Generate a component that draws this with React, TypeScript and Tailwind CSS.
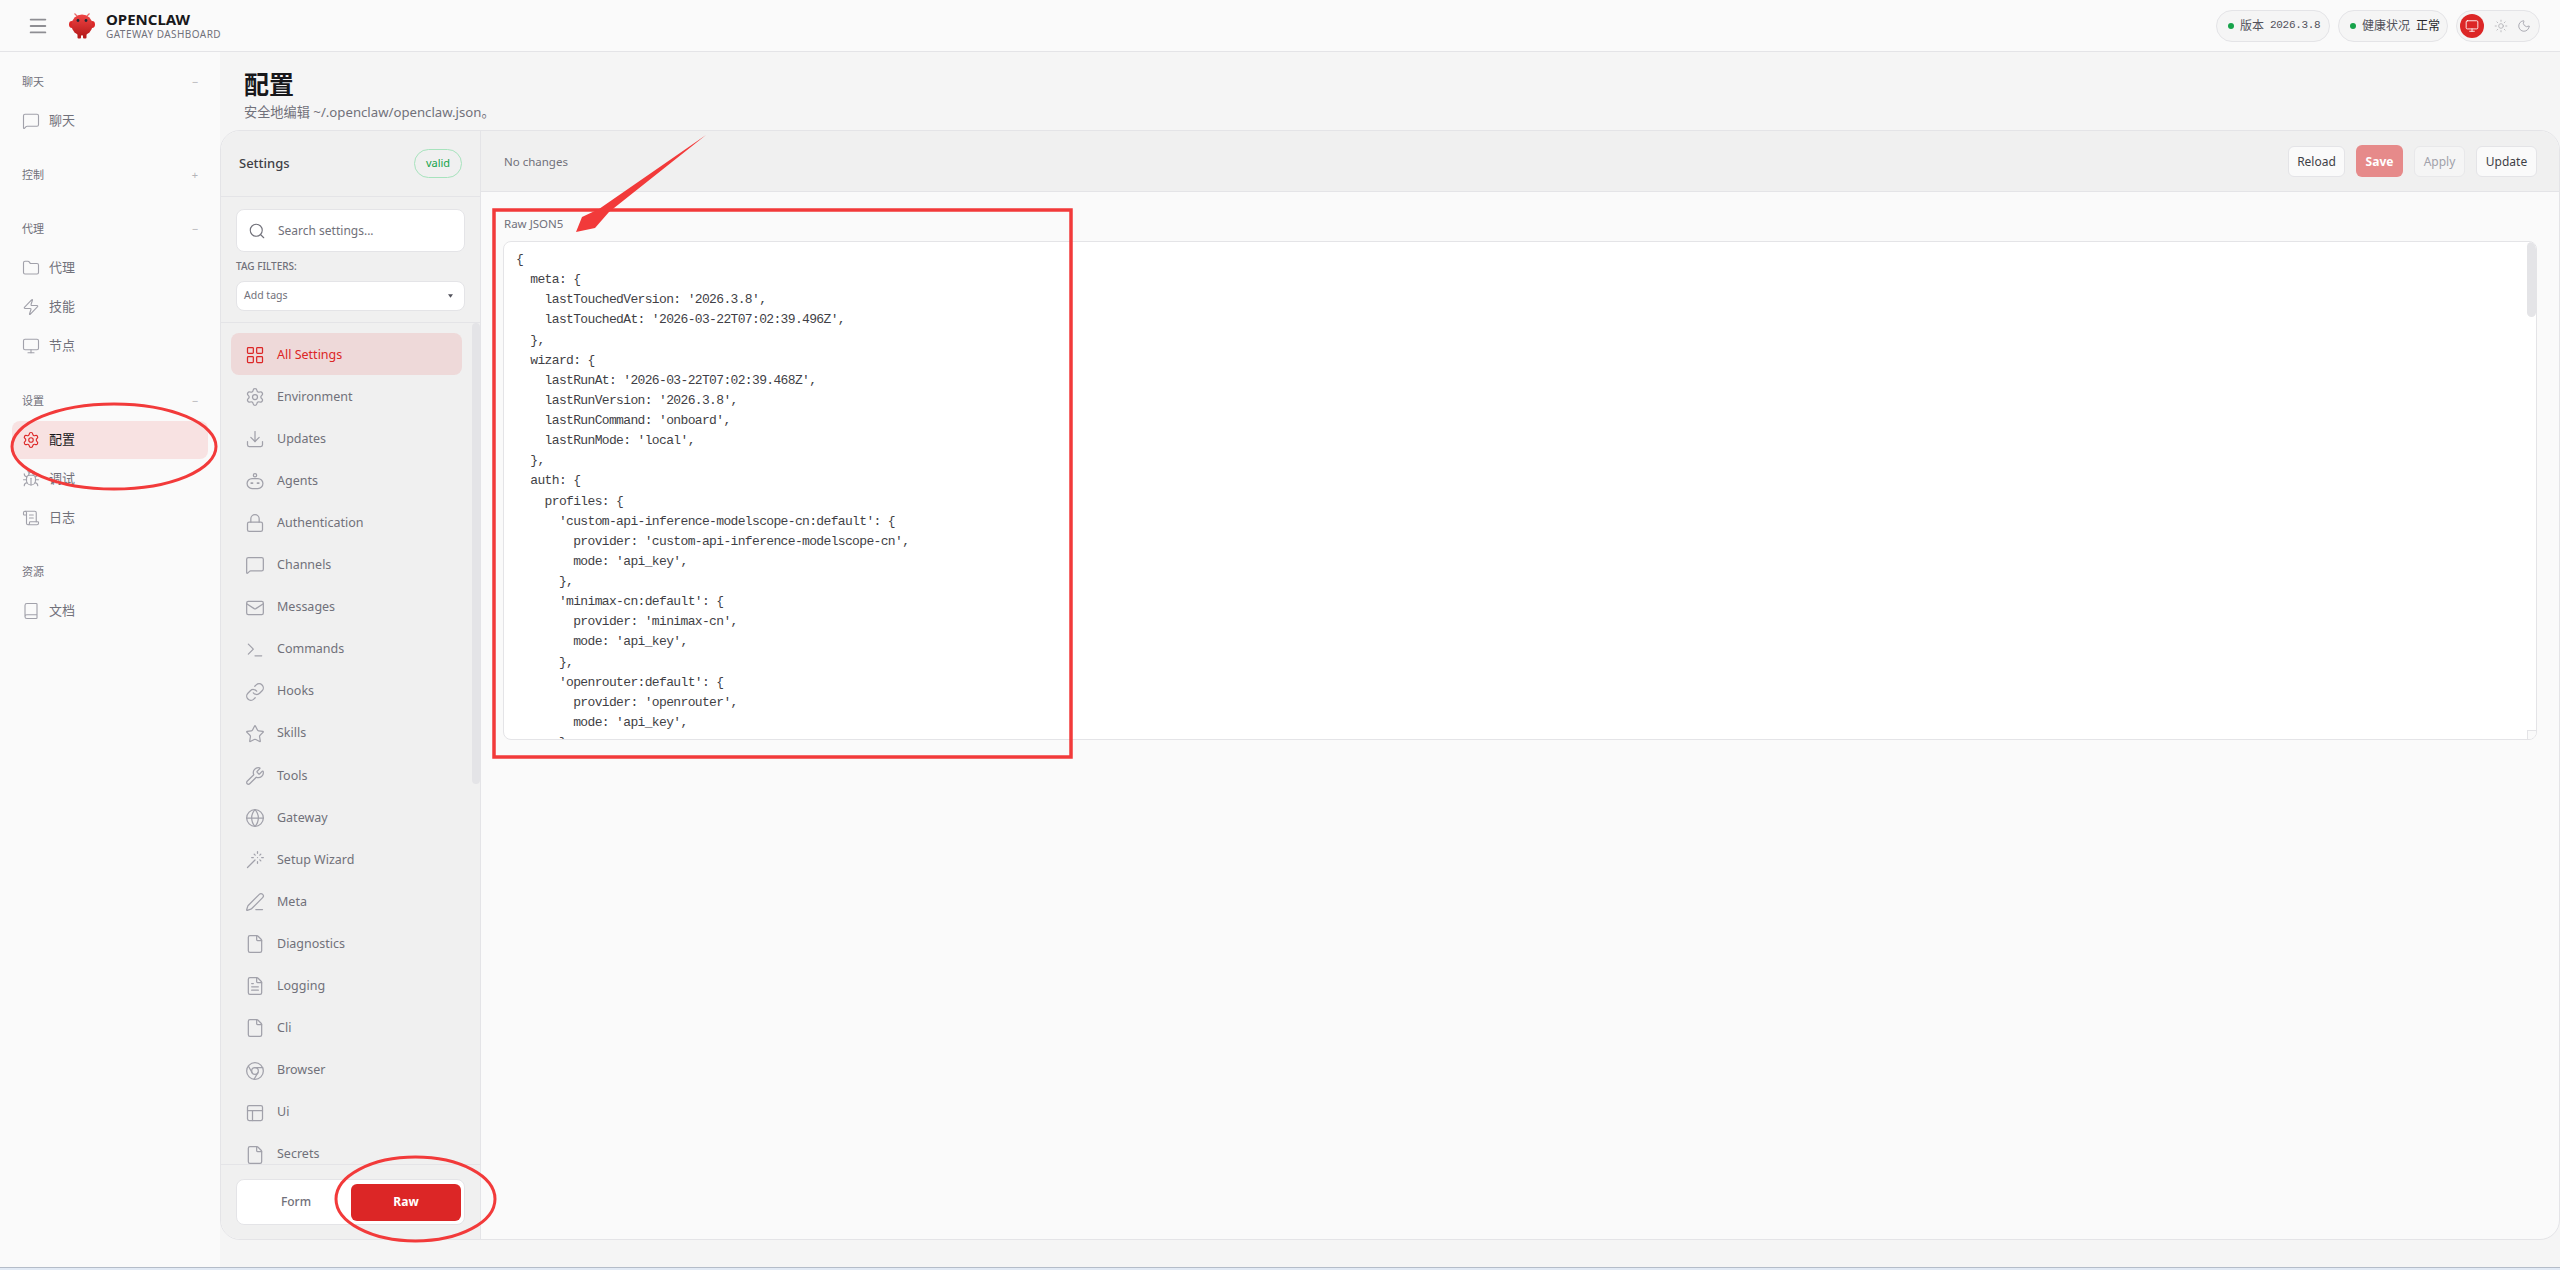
import {
  Book,
  Bug,
  Chrome,
  Download,
  File,
  FileText,
  Folder,
  Globe,
  LayoutGrid,
  Link,
  Lock,
  Mail,
  Menu,
  MessageSquare,
  Monitor,
  Moon,
  PanelsTopLeft,
  PenLine,
  ScrollText,
  Search,
  Settings,
  Star,
  Sun,
  Terminal,
  Wand,
  Wrench,
  Zap,
} from "lucide-react";

const BotIcon = ({ className }: { className?: string }) => (
  <svg viewBox="0 0 24 24" fill="none" stroke="currentColor" strokeWidth="1.5" className={className}>
    <circle cx="12" cy="5" r="2" />
    <rect x="2.5" y="9" width="19" height="12" rx="6" />
    <path d="M7.5 14.5h1.5M15 14.5h1.5" strokeWidth="2.2" strokeLinecap="round" />
  </svg>
);

const settingsNav = [
  { label: "Environment", icon: Settings },
  { label: "Updates", icon: Download },
  { label: "Agents", icon: BotIcon },
  { label: "Authentication", icon: Lock },
  { label: "Channels", icon: MessageSquare },
  { label: "Messages", icon: Mail },
  { label: "Commands", icon: Terminal },
  { label: "Hooks", icon: Link },
  { label: "Skills", icon: Star },
  { label: "Tools", icon: Wrench },
  { label: "Gateway", icon: Globe },
  { label: "Setup Wizard", icon: Wand },
  { label: "Meta", icon: PenLine },
  { label: "Diagnostics", icon: File },
  { label: "Logging", icon: FileText },
  { label: "Cli", icon: File },
  { label: "Browser", icon: Chrome },
  { label: "Ui", icon: PanelsTopLeft },
  { label: "Secrets", icon: File },
];

const rawConfig = `{
  meta: {
    lastTouchedVersion: '2026.3.8',
    lastTouchedAt: '2026-03-22T07:02:39.496Z',
  },
  wizard: {
    lastRunAt: '2026-03-22T07:02:39.468Z',
    lastRunVersion: '2026.3.8',
    lastRunCommand: 'onboard',
    lastRunMode: 'local',
  },
  auth: {
    profiles: {
      'custom-api-inference-modelscope-cn:default': {
        provider: 'custom-api-inference-modelscope-cn',
        mode: 'api_key',
      },
      'minimax-cn:default': {
        provider: 'minimax-cn',
        mode: 'api_key',
      },
      'openrouter:default': {
        provider: 'openrouter',
        mode: 'api_key',
      },`;

function NavGroup({ title, sign, className, children }: { title: string; sign: string; className?: string; children?: React.ReactNode }) {
  return (
    <div className={className}>
      <div className="h-[22px] pl-[22px] pr-[22px] flex items-center justify-between text-[11px] text-[#71717a]">
        <span>{title}</span>
        <span className="text-[#b4b4b8] text-[11px]">{sign}</span>
      </div>
      {children && <div className="mt-[9px] flex flex-col gap-[1px]">{children}</div>}
    </div>
  );
}

function NavItem({ label, icon: Icon, active }: { label: string; icon: React.ComponentType<{ className?: string; strokeWidth?: number }>; active?: boolean }) {
  return (
    <div className={`mx-3 h-[38px] pl-[10px] rounded-[8px] flex items-center gap-[9px] text-[13px] ${active ? "bg-[#f8e2e2] text-[#18181b]" : "text-[#71717a]"}`}>
      <Icon strokeWidth={1.5} className={`w-[18px] h-[18px] ${active ? "text-[#dc2626]" : "text-[#a1a1aa]"}`} />
      <span>{label}</span>
    </div>
  );
}

export default function App() {
  return (
    <div className="relative w-full h-[1270px] overflow-hidden bg-[#f5f5f5] font-['Noto_Sans','Noto_Sans_CJK_SC',sans-serif] flex flex-col">
      {/* Top bar */}
      <header className="h-[52px] shrink-0 bg-[#fafafa] border-b border-[#e4e4e7] flex items-center pl-[27px] pr-[20px]">
        <Menu strokeWidth={2} className="w-[22px] h-[22px] text-[#8e8e93]" />
        <svg viewBox="0 0 26 26" className="ml-[20px] w-[26px] h-[26px]">
          <defs>
            <linearGradient id="claw" x1="0" y1="0" x2="0" y2="1">
              <stop offset="0" stopColor="#ef4444" />
              <stop offset="1" stopColor="#b91c1c" />
            </linearGradient>
          </defs>
          <path d="M8 3 5.5 0.5M18 3l2.5-2.5" stroke="#e86a6a" strokeWidth="1.2" />
          <rect x="8.5" y="20" width="3.5" height="5.5" rx="1" fill="#b91c1c" />
          <rect x="14" y="20" width="3.5" height="5.5" rx="1" fill="#b91c1c" />
          <ellipse cx="3" cy="11.5" rx="3" ry="3.4" fill="#dc2626" />
          <ellipse cx="23" cy="11.5" rx="3" ry="3.4" fill="#dc2626" />
          <circle cx="13" cy="12" r="10.5" fill="url(#claw)" />
          <circle cx="9" cy="7.5" r="1.4" fill="#1f2937" />
          <circle cx="17" cy="7.5" r="1.4" fill="#1f2937" />
        </svg>
        <div className="ml-[11px] flex flex-col">
          <span className="text-[15px] leading-[17px] font-bold text-[#18181b]">OPENCLAW</span>
          <span className="text-[10px] leading-[12px] tracking-[0.45px] text-[#71717a]">GATEWAY DASHBOARD</span>
        </div>
        <div className="ml-auto flex items-center gap-2">
          <div className="h-8 w-[114px] pl-[11px] rounded-full bg-[#f5f5f5] border border-[#e4e4e7] flex items-center gap-[6px] text-[12px] text-[#52525b]">
            <span className="w-[6px] h-[6px] rounded-full bg-[#16a34a]" />
            <span>版本</span>
            <span className="font-['Liberation_Mono',monospace] text-[11px] tracking-[-0.3px]">2026.3.8</span>
          </div>
          <div className="h-8 w-[110px] pl-[11px] rounded-full bg-[#f5f5f5] border border-[#e4e4e7] flex items-center gap-[6px] text-[12px] text-[#52525b]">
            <span className="w-[6px] h-[6px] rounded-full bg-[#16a34a]" />
            <span>健康状况</span>
            <span className="text-[#27272a]">正常</span>
          </div>
          <div className="h-8 w-[84px] pl-[3px] pr-[8px] rounded-full bg-[#f5f5f5] border border-[#e4e4e7] flex items-center justify-between">
            <span className="w-6 h-6 rounded-full bg-[#dc2626] flex items-center justify-center text-white">
              <Monitor strokeWidth={1.5} className="w-[14px] h-[14px]" />
            </span>
            <Sun strokeWidth={1.5} className="w-[14px] h-[14px] text-[#b4b4b8]" />
            <Moon strokeWidth={1.5} className="w-[14px] h-[14px] text-[#a1a1aa]" />
          </div>
        </div>
      </header>

      <div className="flex-1 min-h-0 flex">
        {/* Left navigation */}
        <aside className="w-[220px] shrink-0 bg-[#fafafa] pt-[19px]">
          <NavGroup title="聊天" sign="−">
            <NavItem label="聊天" icon={MessageSquare} />
          </NavGroup>
          <NavGroup title="控制" sign="+" className="mt-[24px]" />
          <NavGroup title="代理" sign="−" className="mt-[32px]">
            <NavItem label="代理" icon={Folder} />
            <NavItem label="技能" icon={Zap} />
            <NavItem label="节点" icon={Monitor} />
          </NavGroup>
          <NavGroup title="设置" sign="−" className="mt-[25px]">
            <NavItem label="配置" icon={Settings} active />
            <NavItem label="调试" icon={Bug} />
            <NavItem label="日志" icon={ScrollText} />
          </NavGroup>
          <NavGroup title="资源" sign="" className="mt-[24px]">
            <NavItem label="文档" icon={Book} />
          </NavGroup>
        </aside>

        {/* Main */}
        <main className="flex-1 min-w-0 flex flex-col">
          <div className="h-[78px] shrink-0 pl-[24px] pt-[16px]">
            <h1 className="text-[25px] leading-[32px] font-bold text-[#18181b]">配置</h1>
            <p className="text-[13.2px] leading-[20px] mt-[2px] text-[#71717a]">安全地编辑 ~/.openclaw/openclaw.json。</p>
          </div>
          <div className="h-[1110px] shrink-0 flex border border-[#e4e4e7] rounded-[20px] overflow-hidden bg-[#fafafa]">
            {/* Settings column */}
            <div className="w-[260px] shrink-0 bg-[#f0f0f0] border-r border-[#e4e4e7] flex flex-col">
              <div className="h-[66px] shrink-0 border-b border-[#e4e4e7] pl-[18px] pr-[18px] flex items-center justify-between">
                <span className="text-[13px] font-medium text-[#3f3f46]">Settings</span>
                <span className="h-[29px] w-[48px] rounded-full border border-[#a7e3bd] flex items-center justify-center text-[11px] text-[#16a34a]">valid</span>
              </div>
              <div className="h-[126px] shrink-0 border-b border-[#e4e4e7] px-[15px] pt-[12px]">
                <div className="h-[43px] rounded-[8px] bg-white border border-[#e4e4e7] flex items-center pl-[11px] gap-[12px]">
                  <Search strokeWidth={1.5} className="w-[18px] h-[18px] text-[#71717a]" />
                  <span className="text-[12px] text-[#71717a]">Search settings...</span>
                </div>
                <div className="mt-[7px] text-[10px] leading-[14px] font-medium text-[#71717a]">TAG FILTERS:</div>
                <div className="mt-[8px] h-[30px] rounded-[8px] bg-white border border-[#e4e4e7] flex items-center justify-between pl-[7px] pr-[11px]">
                  <span className="text-[10.5px] text-[#71717a]">Add tags</span>
                  <svg viewBox="0 0 6 4" className="w-[5px] h-[4px]">
                    <path d="M0 0h6L3 4z" fill="#52525b" />
                  </svg>
                </div>
              </div>
              <div className="relative flex-1 min-h-0 overflow-hidden pl-[10px] pr-[18px] pt-[10px]">
                <div className="absolute right-0 top-0 w-2 h-[461px] rounded-full bg-[#e4e4e7]" />
                <div className="h-[42px] pt-[2px] rounded-[8px] bg-[#eed9d9] flex items-center pl-[14px] gap-[12px] text-[12.5px] text-[#dc2626]">
                  <LayoutGrid strokeWidth={1.5} className="w-5 h-5" />
                  <span>All Settings</span>
                </div>
                {settingsNav.map((item) => (
                  <div key={item.label} className="h-[42.1px] pt-[2px] pl-[14px] flex items-center gap-[12px] text-[12.5px] text-[#71717a]">
                    <item.icon strokeWidth={1.5} className="w-5 h-5 text-[#a1a1aa]" />
                    <span>{item.label}</span>
                  </div>
                ))}
              </div>
              <div className="h-[75px] shrink-0 border-t border-[#e4e4e7] px-[15px] pt-[14px]">
                <div className="h-[46px] rounded-[8px] bg-white border border-[#e4e4e7] flex items-center pl-[4px] pr-[3px] text-[12px] font-medium">
                  <span className="flex-1 text-center text-[#71717a]">Form</span>
                  <span className="w-[110px] h-[37px] rounded-[6px] bg-[#dc2626] text-white font-bold flex items-center justify-center">Raw</span>
                </div>
              </div>
            </div>

            {/* Editor column */}
            <div className="flex-1 min-w-0 flex flex-col">
              <div className="h-[61px] shrink-0 bg-[#f0f0f0] border-b border-[#e4e4e7] pl-[23px] pr-[22px] flex items-center justify-between">
                <span className="pt-[2px] text-[11.5px] text-[#71717a]">No changes</span>
                <div className="flex items-center gap-[11px] text-[12px]">
                  <span className="h-[31px] w-[57px] pt-[2px] rounded-[6px] bg-[#fafafa] border border-[#e4e4e7] flex items-center justify-center text-[#3f3f46]">Reload</span>
                  <span className="h-[32px] w-[47px] pt-[2px] rounded-[6px] bg-[#e68a8a] font-bold flex items-center justify-center text-white">Save</span>
                  <span className="h-[31px] w-[51px] pt-[2px] rounded-[6px] bg-[#f5f5f5] border border-[#e8e8ea] flex items-center justify-center text-[#a1a1aa]">Apply</span>
                  <span className="h-[31px] w-[61px] pt-[2px] rounded-[6px] bg-[#fafafa] border border-[#e4e4e7] flex items-center justify-center text-[#3f3f46]">Update</span>
                </div>
              </div>
              <div className="pl-[22px] pr-[22px] pt-[23px]">
                <div className="pl-[1px] text-[11.5px] leading-[18px] text-[#71717a]">Raw JSON5</div>
                <div className="relative mt-[8px] h-[499px] rounded-[8px] bg-white border border-[#e4e4e7] overflow-hidden">
                  <pre className="pl-[12px] pt-[8px] font-['Liberation_Mono',monospace] text-[13px] leading-[20.13px] tracking-[-0.65px] text-[#3f3f46]">{rawConfig}</pre>
                  <div className="absolute right-0 top-0 w-[9px] h-[75px] rounded-full bg-[#e4e4e7]" />
                  <div className="absolute right-0 bottom-0 w-[9px] h-[9px] bg-[#fafafa] border-l border-t border-[#e4e4e7]" />
                </div>
              </div>
            </div>
          </div>
        </main>
      </div>

      {/* Bottom edge of the captured window */}
      <div className="h-[3px] shrink-0 bg-[#e2eaf5] border-t border-[#b4bcc8]" />

      {/* Annotations drawn over the screenshot */}
      <svg viewBox="0 0 2560 1270" className="absolute left-0 top-0 w-[2560px] h-[1270px] pointer-events-none" fill="none" stroke="#f23a3a">
        <rect x="494" y="210" width="577" height="547" strokeWidth="3.5" />
        <ellipse cx="114" cy="446.5" rx="102" ry="42.5" strokeWidth="3" />
        <ellipse cx="415.5" cy="1199" rx="79.5" ry="42" strokeWidth="3" />
        <path d="M706 135 L609 212 L595 228 L576 232 L582 217 L599 209 Z" fill="#f23a3a" stroke="none" />
      </svg>
    </div>
  );
}
